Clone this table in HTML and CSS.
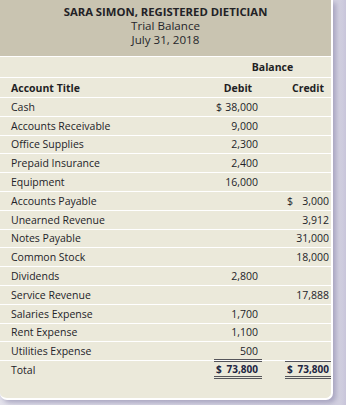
FILE: index.html
```html
<!DOCTYPE html>
<html>
<head>
<meta charset="utf-8">
<link rel="stylesheet" href="styles.css">
</head>
<body>
<div class="panel">
  <div class="head">
    <div class="company">SARA SIMON, REGISTERED DIETICIAN</div>
    <div class="sub">Trial Balance</div>
    <div class="sub">July 31, 2018</div>
  </div>
  <div class="row bold first">
    <div class="title"></div>
    <div class="span">Balance</div>
  </div>
  <div class="row bold">
    <div class="title">Account Title</div>
    <div class="dr center">Debit</div>
    <div class="cr center">Credit</div>
  </div>
  <div class="row"><div class="title">Cash</div><div class="dr"><span>$</span>38,000</div><div class="cr"></div></div>
  <div class="row"><div class="title">Accounts Receivable</div><div class="dr">9,000</div><div class="cr"></div></div>
  <div class="row"><div class="title">Office Supplies</div><div class="dr">2,300</div><div class="cr"></div></div>
  <div class="row"><div class="title">Prepaid Insurance</div><div class="dr">2,400</div><div class="cr"></div></div>
  <div class="row"><div class="title">Equipment</div><div class="dr">16,000</div><div class="cr"></div></div>
  <div class="row"><div class="title">Accounts Payable</div><div class="dr"></div><div class="cr"><span>$</span>3,000</div></div>
  <div class="row"><div class="title">Unearned Revenue</div><div class="dr"></div><div class="cr">3,912</div></div>
  <div class="row"><div class="title">Notes Payable</div><div class="dr"></div><div class="cr">31,000</div></div>
  <div class="row"><div class="title">Common Stock</div><div class="dr"></div><div class="cr">18,000</div></div>
  <div class="row"><div class="title">Dividends</div><div class="dr">2,800</div><div class="cr"></div></div>
  <div class="row"><div class="title">Service Revenue</div><div class="dr"></div><div class="cr">17,888</div></div>
  <div class="row"><div class="title">Salaries Expense</div><div class="dr">1,700</div><div class="cr"></div></div>
  <div class="row"><div class="title">Rent Expense</div><div class="dr">1,100</div><div class="cr"></div></div>
  <div class="row pre-total"><div class="title">Utilities Expense</div><div class="dr">500</div><div class="cr"></div></div>
  <div class="row total">
    <div class="title">Total</div>
    <div class="dr sum"><span>$</span>73,800</div>
    <div class="cr sum"><span>$</span>73,800</div>
  </div>
  <div class="foot"></div>
</div>
</body>
</html>
```
FILE: styles.css
```css
html, body {
  margin: 0;
  padding: 0;
}
body {
  width: 346px;
  height: 405px;
  background: linear-gradient(90deg, #e4e3ec 0px, #d2d0e0 340px, #c8c5da 346px);
  font-family: "Open Sans", "Liberation Sans", sans-serif;
  color: #232328;
  overflow: hidden;
}
.panel {
  width: 331px;
  background: #ebe9da;
  border-right: 2px solid #ffffff;
  border-bottom: 2px solid #ffffff;
  border-bottom-right-radius: 7px;
  border-bottom-left-radius: 7px;
  box-shadow: 3px 3px 5px rgba(150, 146, 178, 0.7);
}
.head {
  background: #c9c4b1;
  height: 57px;
  box-sizing: border-box;
  padding-top: 5px;
  text-align: center;
  border-bottom: 1px solid #ffffff;
}
.company {
  font-weight: 700;
  font-size: 11.3px;
  line-height: 14px;
  color: #222226;
}
.sub {
  font-size: 11.6px;
  line-height: 14px;
  color: #26262b;
}
.row {
  display: flex;
  align-items: center;
  height: 17.8px;
  border-bottom: 1px solid #ffffff;
  font-size: 10.5px;
}
.row.bold {
  font-weight: 700;
  height: 19px;
  color: #1f1f24;
}
.row.first {
  height: 20px;
}
.title {
  flex: 1;
  padding-left: 11px;
}
.dr {
  width: 44px;
  padding-right: 4px;
  height: 100%;
  display: flex;
  align-items: center;
  justify-content: flex-end;
  white-space: nowrap;
}
.cr {
  width: 44px;
  margin-left: 23px;
  padding-right: 2px;
  height: 100%;
  display: flex;
  align-items: center;
  justify-content: flex-end;
  white-space: nowrap;
}
.dr span, .cr span {
  margin-right: auto;
  padding-left: 2px;
}
.center {
  justify-content: center;
  padding-right: 0;
  width: 48px;
}
.cr.center {
  width: 46px;
}
.span {
  width: 117px;
  text-align: center;
}
.pre-total .dr {
  box-shadow: inset 0 -1px 0 #55555a;
}
.total {
  border-bottom: none;
}
.total .dr, .total .cr {
  border-top: 1px solid #55555a;
  border-bottom: 3px double #55555a;
  box-sizing: border-box;
}
.total .dr {
  width: 48px;
}
.total .cr {
  width: 46px;
}
.sum {
  font-weight: 700;
  font-size: 10px;
  color: #1d2542;
}
.foot {
  height: 19px;
}
```
